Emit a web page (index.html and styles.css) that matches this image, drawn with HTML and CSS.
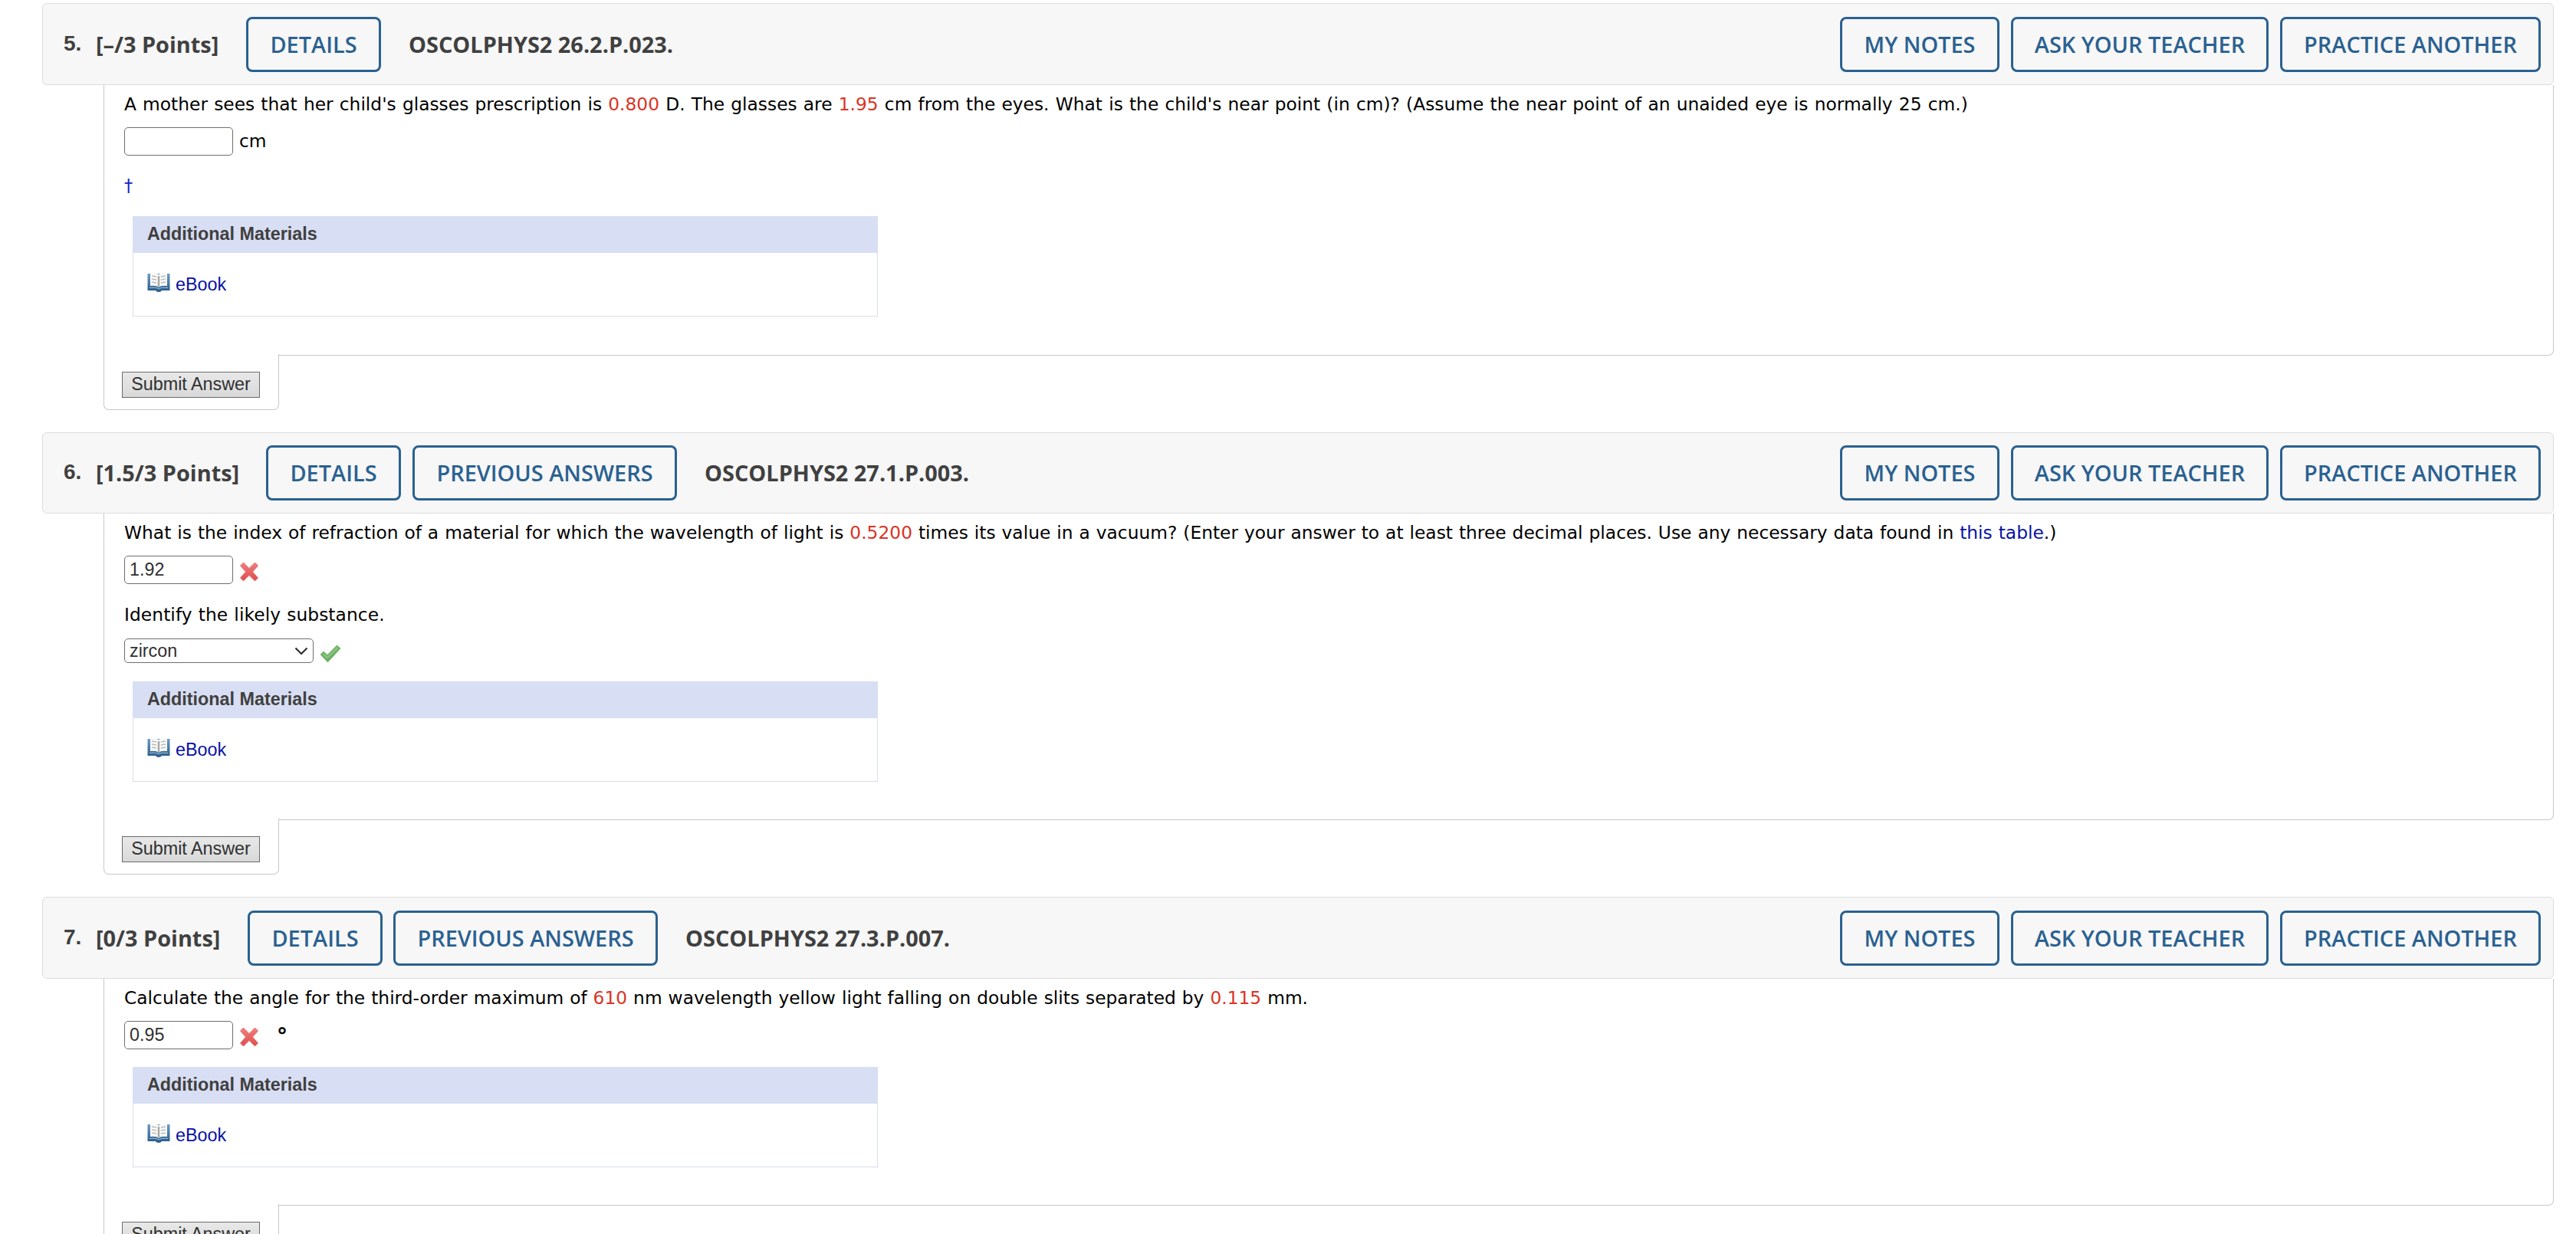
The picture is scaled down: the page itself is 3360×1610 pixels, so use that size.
FILE: index.html
```html
<!DOCTYPE html>
<html lang="en">
<head>
<meta charset="utf-8">
<title>Assignment Questions</title>
<link rel="stylesheet" href="styles.css">
</head>
<body>
<svg class="defs" width="0" height="0" aria-hidden="true">
  <defs>
    <linearGradient id="cover" x1="0" y1="0" x2="0" y2="1">
      <stop offset="0" stop-color="#6d9cc4"/>
      <stop offset="1" stop-color="#265a8a"/>
    </linearGradient>
    <linearGradient id="red" x1="0" y1="0" x2="0" y2="1">
      <stop offset="0" stop-color="#f08080"/>
      <stop offset="1" stop-color="#dc4c4a"/>
    </linearGradient>
    <symbol id="book" viewBox="0 0 30 26">
      <path d="M.5 2H29.500V24H19Q18 26 15 26T11 24H.5Z" fill="url(#cover)"/>
      <path d="M4 1Q11 -.5 15 3.500Q19 -.5 26 1V18Q18 17 15 20Q12 17 4 18Z" fill="#f9f9f7"/>
      <path d="M3 20.500Q12 19.500 15 22Q18 19.500 27 20.500" fill="none" stroke="#a9c3da" stroke-width="1"/>
      <path d="M15 5V19" stroke="#a9a9a9" stroke-width="2.500"/>
      <path d="M6 5L12 6M6 9L12 10M6 13L12 14M18 6L24 5M18 10L24 9M18 14L24 13" stroke="#bdbdbd" stroke-width="1.500"/>
    </symbol>
    <symbol id="wrong" viewBox="0 0 24 26">
      <path d="M4.500 1L12 8.500L19.500 1L23.500 5L16.500 13L23.500 21L19.500 25L12 17.500L4.500 25L.5 21L7.500 13L.5 5Z" fill="url(#red)" stroke="#e77371" stroke-width="1" stroke-linejoin="round"/>
    </symbol>
    <symbol id="right" viewBox="0 0 28 24">
      <path d="M1 13L5 9L10 13.500L22.500 1L27 5L10.500 23Z" fill="#6db164" stroke="#7fb876" stroke-width="1" stroke-linejoin="round"/>
      <path d="M4.500 12.500L10 17L23.500 4" fill="none" stroke="#8cc980" stroke-width="2"/>
    </symbol>
  </defs>
</svg>

<main class="assignment">
  <section class="question q5">
    <header class="bar">
      <span class="number">5.</span>
      <span class="points">[–/3 Points]</span>
      <button class="btn details">DETAILS</button>
      <span class="code">OSCOLPHYS2 26.2.P.023.</span>
      <nav class="actions">
        <button class="btn notes">MY NOTES</button>
        <button class="btn ask">ASK YOUR TEACHER</button>
        <button class="btn practice">PRACTICE ANOTHER</button>
      </nav>
    </header>
    <div class="body">
      <p class="prompt">A mother sees that her child's glasses prescription is <em>0.800</em> D. The glasses are <em>1.95</em> cm from the eyes. What is the child's near point (in cm)? (Assume the near point of an unaided eye is normally 25 cm.)</p>
      <div class="answer"><span class="field"></span><span class="unit">cm</span></div>
      <p class="dagger">†</p>
      <div class="materials">
        <h3>Additional Materials</h3>
        <div class="ebook"><svg class="book"><use href="#book"/></svg><a>eBook</a></div>
      </div>
    </div>
    <footer class="submit"><button>Submit Answer</button></footer>
  </section>

  <section class="question q6">
    <header class="bar">
      <span class="number">6.</span>
      <span class="points">[1.5/3 Points]</span>
      <button class="btn details">DETAILS</button>
      <button class="btn previous">PREVIOUS ANSWERS</button>
      <span class="code">OSCOLPHYS2 27.1.P.003.</span>
      <nav class="actions">
        <button class="btn notes">MY NOTES</button>
        <button class="btn ask">ASK YOUR TEACHER</button>
        <button class="btn practice">PRACTICE ANOTHER</button>
      </nav>
    </header>
    <div class="body">
      <p class="prompt">What is the index of refraction of a material for which the wavelength of light is <em>0.5200</em> times its value in a vacuum? (Enter your answer to at least three decimal places. Use any necessary data found in <a>this table</a>.)</p>
      <div class="answer"><span class="field">1.92</span><svg class="wrong"><use href="#wrong"/></svg></div>
      <p class="prompt identify">Identify the likely substance.</p>
      <div class="answer choice">
        <span class="select">zircon<svg class="chevron" viewBox="0 0 18 11"><path d="M1.500 1.500L9 9L16.500 1.500"/></svg></span>
        <svg class="right"><use href="#right"/></svg>
      </div>
      <div class="materials">
        <h3>Additional Materials</h3>
        <div class="ebook"><svg class="book"><use href="#book"/></svg><a>eBook</a></div>
      </div>
    </div>
    <footer class="submit"><button>Submit Answer</button></footer>
  </section>

  <section class="question q7">
    <header class="bar">
      <span class="number">7.</span>
      <span class="points">[0/3 Points]</span>
      <button class="btn details">DETAILS</button>
      <button class="btn previous">PREVIOUS ANSWERS</button>
      <span class="code">OSCOLPHYS2 27.3.P.007.</span>
      <nav class="actions">
        <button class="btn notes">MY NOTES</button>
        <button class="btn ask">ASK YOUR TEACHER</button>
        <button class="btn practice">PRACTICE ANOTHER</button>
      </nav>
    </header>
    <div class="body">
      <p class="prompt">Calculate the angle for the third-order maximum of <em>610</em> nm wavelength yellow light falling on double slits separated by <em>0.115</em> mm.</p>
      <div class="answer"><span class="field">0.95</span><svg class="wrong"><use href="#wrong"/></svg><span class="degree">°</span></div>
      <div class="materials">
        <h3>Additional Materials</h3>
        <div class="ebook"><svg class="book"><use href="#book"/></svg><a>eBook</a></div>
      </div>
    </div>
    <footer class="submit"><button>Submit Answer</button></footer>
  </section>
</main>
</body>
</html>
```
FILE: styles.css
```css
* { box-sizing: border-box; }

html { height: 1610px; overflow: hidden; }

body {
  height: 1610px;
  margin: 0;
  overflow: hidden;
  background: #fff;
  color: #000;
  font: 23.33px/28px "DejaVu Sans", sans-serif;
}

p, h3 { margin: 0; }

.defs { display: block; }

.assignment {
  width: 3276px;
  margin-left: 55px;
  padding-top: 4px;
}

.question {
  display: flex;
  flex-direction: column;
  margin-bottom: 29px;
}

/* Title bar */
.bar {
  display: flex;
  height: 107px;
  padding: 17px 16px 0 27px;
  background: #f7f7f7;
  border: 1px solid #ddd;
  border-radius: 6px;
  color: #404040;
  font: bold 28.9px/72px "Open Sans", sans-serif;
  white-space: nowrap;
}

.q6 .bar { height: 106px; padding-top: 16px; }

.number {
  width: 42px;
  font: bold 28px/70px "Liberation Sans", Arial, sans-serif;
}

.points { width: 196px; }
.q6 .points { width: 222px; }
.q7 .points { width: 198px; }

.btn {
  height: 72px;
  padding: 0;
  border: 3px solid #2a6191;
  border-radius: 8px;
  background: transparent;
  color: #2a6191;
  font: 600 28.9px/66px "Open Sans", sans-serif;
  text-align: center;
}

.details { width: 176px; }
.previous { width: 345px; margin-left: 14px; }
.q6 .previous { margin-left: 15px; }
.code { margin-left: 36px; }

.actions {
  display: flex;
  gap: 15px;
  margin-left: auto;
}

.notes { width: 208px; }
.ask { width: 336px; }
.practice { width: 340px; }

/* Question body */
.body {
  display: flex;
  flex-direction: column;
  align-items: flex-start;
  height: 353px;
  margin-left: 80px;
  padding: 11px 0 0 26px;
  border: 1px solid #c8c8c8;
  border-top: 0;
  border-radius: 0 0 7px 0;
}

.q6 .body { height: 400px; }
.q7 .body { height: 296px; }

.prompt {
  height: 44px;
  word-spacing: .75px;
  white-space: nowrap;
}

.q6 .prompt, .q7 .prompt { word-spacing: .56px; }

.prompt em { color: #db3325; font-style: normal; }

a { color: #0712a5; }

.answer {
  display: flex;
  height: 37px;
}

.field, .select {
  border: 1px solid #6f6f6f;
  border-radius: 5px;
  color: #303030;
  font: 23.33px/34px "Liberation Sans", Arial, sans-serif;
}

.field {
  width: 142px;
  height: 37px;
  padding-left: 6px;
}

.unit { margin-left: 8px; line-height: 36px; }

.dagger {
  height: 79px;
  padding-top: 25px;
  color: #1522c8;
  font-size: 22.5px;
}

.wrong { width: 24px; height: 26px; margin: 8px 0 0 9px; }

.degree {
  margin: 6px 0 0 24px;
  font-size: 28px;
  -webkit-text-stroke: .6px #000;
}

.prompt.identify { height: 71px; padding-top: 26px; letter-spacing: .08px; }

.choice { height: 56px; }

.select {
  display: flex;
  align-items: center;
  justify-content: space-between;
  width: 247px;
  height: 32px;
  padding: 0 6px;
  line-height: 30px;
}

.chevron {
  width: 18px;
  height: 11px;
  fill: none;
  stroke: #303030;
  stroke-width: 2.2px;
}

.right { width: 28px; height: 24px; margin: 8px 0 0 8px; }

/* Additional materials */
.materials {
  width: 972px;
  height: 131px;
  margin-left: 11px;
  border: 1px solid #d8ddea;
  font-family: "Liberation Sans", Arial, sans-serif;
}

.q7 .materials { margin-top: 23px; }

.materials h3 {
  height: 48px;
  margin: -1px -1px 0;
  padding-left: 19px;
  background: #d8def3;
  color: #404040;
  font: bold 23.33px/47px "Liberation Sans", Arial, sans-serif;
}

.ebook {
  display: flex;
  padding: 25px 0 0 18px;
}

.book { width: 30px; height: 26px; margin-right: 7px; }
.ebook a { padding-top: 2px; }

/* Submit tab hanging below the body */
.submit {
  z-index: 1;
  width: 229px;
  height: 73px;
  margin: -2px 0 0 80px;
  padding: 23px 0 0 23px;
  background: #fff;
  border: 1px solid #c8c8c8;
  border-top: 0;
  border-radius: 0 0 7px 7px;
}

.submit button {
  width: 180px;
  height: 34px;
  padding: 0 0 2px;
  border: 1px solid #6b6b6b;
  background: linear-gradient(#e8e8e8, #d9d9d9);
  color: #303030;
  font: 23.33px/30px "Liberation Sans", Arial, sans-serif;
}
```
